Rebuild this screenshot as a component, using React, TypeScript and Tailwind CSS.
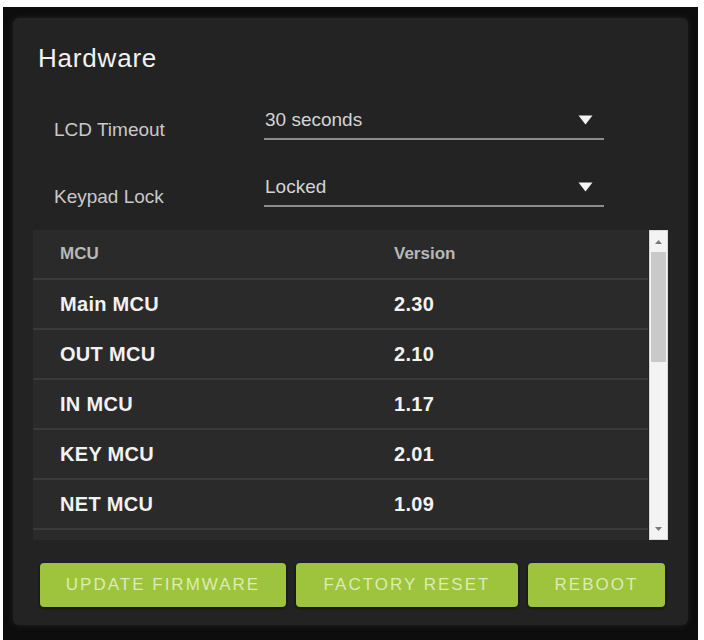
import React from 'react';

const mcus = [
  { name: 'Main MCU', version: '2.30' },
  { name: 'OUT MCU', version: '2.10' },
  { name: 'IN MCU', version: '1.17' },
  { name: 'KEY MCU', version: '2.01' },
  { name: 'NET MCU', version: '1.09' },
  { name: '', version: '' },
];

const actions = [
  { label: 'UPDATE FIRMWARE', width: 'w-[246px]' },
  { label: 'FACTORY RESET', width: 'w-[222px]' },
  { label: 'REBOOT', width: 'w-[137px]' },
];

const Caret = () => (
  <svg width="15" height="10" viewBox="0 0 15 10" className="shrink-0">
    <polygon points="0.5,0.5 14.5,0.5 7.5,9.5" fill="#f4f4f4" />
  </svg>
);

const SelectRow: React.FC<{ label: string; value: string }> = ({ label, value }) => (
  <div className="flex items-end">
    <div className="ml-[21px] w-[210px] text-[19px] leading-[20px] text-[#c9c9c9]">{label}</div>
    <div className="flex h-[38px] w-[340px] items-center justify-between border-b-2 border-[#8c8c8c] pl-[1px] pr-[11px]">
      <span className="text-[19px] leading-[20px] text-[#d4d4d4]">{value}</span>
      <Caret />
    </div>
  </div>
);

export default function App() {
  return (
    <div className="min-h-screen bg-white pl-[3px] pt-[7px] font-['Liberation_Sans',Arial,sans-serif]">
      <div className="h-[633px] w-[695px] overflow-hidden bg-[#0d0d0d] pl-[10px] pt-[11px]">
        <div className="flex h-[607px] w-[675px] flex-col rounded-[6px] bg-[#232323] px-5 pt-[27px] shadow-[0_0_6px_rgba(40,40,40,0.8)]">
          <h1 className="ml-[5px] text-[26px] leading-[26px] tracking-[0.8px] text-[#f2f2f2]">Hardware</h1>

          <div className="mt-[31px] flex flex-col gap-[29px]">
            <SelectRow label="LCD Timeout" value="30 seconds" />
            <SelectRow label="Keypad Lock" value="Locked" />
          </div>

          <div className="mt-[23px] flex h-[310px]">
            <div className="flex-1 overflow-hidden bg-[#2a2a2a]">
              <div className="flex h-[48px] items-center text-[17px] font-bold text-[#b8b8b8]">
                <div className="w-[361px] pl-[27px]">MCU</div>
                <div>Version</div>
              </div>
              {mcus.map((m, i) => (
                <div key={i} className="flex h-[50px] items-center border-t-2 border-[#3a3a3a] text-[20px] font-bold tracking-[0.3px] text-[#f2f2f2]">
                  <div className="w-[361px] pl-[27px]">{m.name}</div>
                  <div>{m.version}</div>
                </div>
              ))}
            </div>
            <div className="ml-[1px] flex w-[19px] flex-col border border-[#d8d8d8] bg-[#f3f3f3]">
              <div className="flex h-[21px] items-center justify-center">
                <svg width="7" height="4" viewBox="0 0 7 4"><polygon points="0,4 7,4 3.5,0" fill="#7a7a7a" /></svg>
              </div>
              <div className="mx-[1px] h-[110px] bg-[#c9c9c9]" />
              <div className="flex-1" />
              <div className="flex h-[20px] items-center justify-center">
                <svg width="7" height="4" viewBox="0 0 7 4"><polygon points="0,0 7,0 3.5,4" fill="#7a7a7a" /></svg>
              </div>
            </div>
          </div>

          <div className="ml-[7px] mt-[23px] flex gap-[10px]">
            {actions.map((b) => (
              <button
                key={b.label}
                className={`${b.width} h-[44px] rounded-[4px] bg-[#9ec33c] text-[17px] tracking-[2px] text-[#dcebb8] shadow-[0_1px_3px_rgba(0,0,0,0.7)]`}
              >
                {b.label}
              </button>
            ))}
          </div>
        </div>
      </div>
    </div>
  );
}
